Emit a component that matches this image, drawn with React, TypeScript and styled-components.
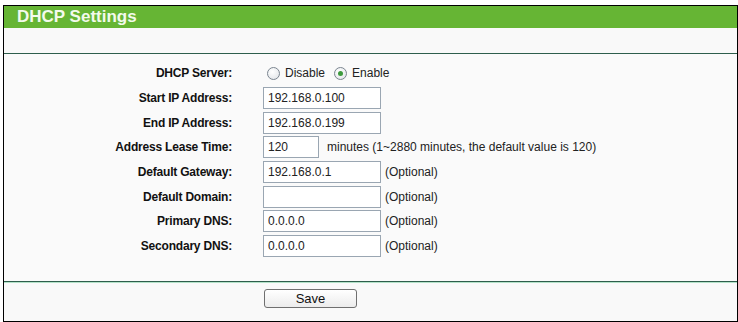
import styled, { createGlobalStyle } from 'styled-components';

const GlobalStyle = createGlobalStyle`
  body {
    margin: 0;
    background: #ffffff;
    font-family: 'Liberation Sans', Arial, sans-serif;
  }
`;

const Panel = styled.section`
  box-sizing: border-box;
  width: 735px;
  height: 317px;
  margin: 5px 0 0 3px;
  border: 1px solid #000;
  background: #f9f9f9;
  display: flex;
  flex-direction: column;
`;

const TitleBar = styled.h1`
  margin: 0;
  height: 22px;
  padding-left: 13px;
  background: #66b534;
  color: #f3faec;
  font-size: 17px;
  font-weight: bold;
  line-height: 22px;
`;

const Band = styled.div`
  height: 25px;
  border-bottom: 1px solid #2e5e4c;
  box-shadow: 0 1px 0 #b3e2c8;
`;

const Form = styled.div`
  padding: 7px 0 22px;
  display: flex;
  flex-direction: column;
  background: #fafafa;
`;

const Row = styled.div`
  display: grid;
  grid-template-columns: 228px 1fr;
  column-gap: 31px;
  align-items: center;
  height: 24.7px;
`;

const Label = styled.span`
  text-align: right;
  font-size: 12px;
  font-weight: bold;
  color: #111;
  letter-spacing: -0.2px;
`;

const Field = styled.div`
  display: flex;
  align-items: center;
  gap: 4px;
  font-size: 12px;
  color: #222;
`;

const Input = styled.input<{ $narrow?: boolean }>`
  box-sizing: border-box;
  width: ${(p) => (p.$narrow ? '56px' : '118px')};
  height: 22px;
  margin: 0;
  padding: 0 0 0 4px;
  border: 1px solid #9aa6b2;
  background: #fff;
  font-family: 'Liberation Sans', Arial, sans-serif;
  font-size: 12px;
  color: #222;
  outline: none;
`;

const Hint = styled.span<{ $wide?: boolean }>`
  margin-left: ${(p) => (p.$wide ? '4px' : '0')};
  color: #222;
`;

const RadioOption = styled.label`
  display: inline-flex;
  align-items: center;
  gap: 5px;
  margin-left: 4px;
  margin-right: 1px;
`;

const RadioDot = styled.span<{ $checked?: boolean }>`
  box-sizing: border-box;
  width: 13px;
  height: 13px;
  border-radius: 50%;
  border: 1px solid #7b8590;
  background: radial-gradient(circle at 40% 35%, #ffffff, #dfe2e6);
  display: inline-flex;
  align-items: center;
  justify-content: center;

  &::after {
    content: '';
    display: ${(p) => (p.$checked ? 'block' : 'none')};
    width: 5px;
    height: 5px;
    border-radius: 50%;
    background: #3d9a3d;
  }
`;

const Footer = styled.div`
  flex: 1;
  border-top: 1px solid #2e5e4c;
  box-shadow: inset 0 1px 0 #b3e2c8;
  padding: 7px 0 0 260px;
`;

const SaveButton = styled.button`
  width: 93px;
  height: 19px;
  padding: 0;
  border: 1px solid #6f6f6f;
  border-radius: 3px;
  background: linear-gradient(#ffffff, #ececec);
  font-family: 'Liberation Sans', Arial, sans-serif;
  font-size: 13px;
  color: #111;
`;

type FieldRow = {
  label: string;
  value: string;
  hint?: string;
  narrow?: boolean;
};

const rows: FieldRow[] = [
  { label: 'Start IP Address:', value: '192.168.0.100' },
  { label: 'End IP Address:', value: '192.168.0.199' },
  {
    label: 'Address Lease Time:',
    value: '120',
    narrow: true,
    hint: 'minutes (1~2880 minutes, the default value is 120)',
  },
  { label: 'Default Gateway:', value: '192.168.0.1', hint: '(Optional)' },
  { label: 'Default Domain:', value: '', hint: '(Optional)' },
  { label: 'Primary DNS:', value: '0.0.0.0', hint: '(Optional)' },
  { label: 'Secondary DNS:', value: '0.0.0.0', hint: '(Optional)' },
];

export default function App() {
  return (
    <>
      <GlobalStyle />
      <Panel>
        <TitleBar>DHCP Settings</TitleBar>
        <Band />
        <Form>
          <Row>
            <Label>DHCP Server:</Label>
            <Field>
              <RadioOption>
                <RadioDot />
                Disable
              </RadioOption>
              <RadioOption>
                <RadioDot $checked />
                Enable
              </RadioOption>
            </Field>
          </Row>
          {rows.map((r) => (
            <Row key={r.label}>
              <Label>{r.label}</Label>
              <Field>
                <Input defaultValue={r.value} $narrow={r.narrow} />
                {r.hint && <Hint $wide={r.narrow}>{r.hint}</Hint>}
              </Field>
            </Row>
          ))}
        </Form>
        <Footer>
          <SaveButton>Save</SaveButton>
        </Footer>
      </Panel>
    </>
  );
}
